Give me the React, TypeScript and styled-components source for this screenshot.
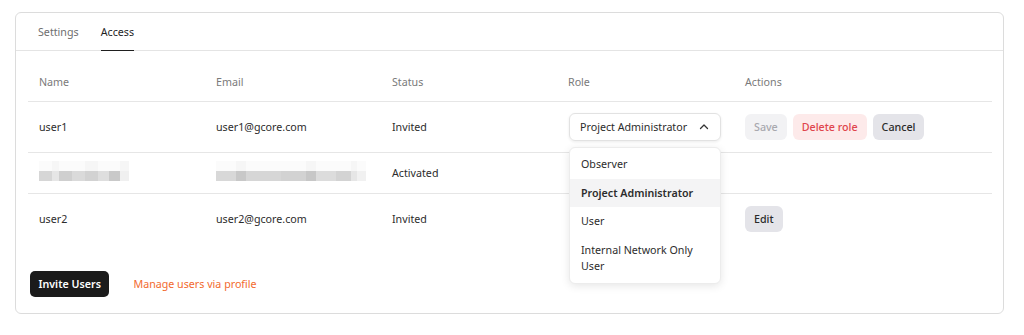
import React from 'react';
import styled, { createGlobalStyle } from 'styled-components';

const GlobalStyle = createGlobalStyle`
  body {
    margin: 0;
    background: #ffffff;
    font-family: 'Noto Sans', 'Open Sans', sans-serif;
    font-size: 10.7px;
    color: #2c2c2c;
  }
`;

const Page = styled.div`
  padding: 12px 20px 0 15px;
`;

const Card = styled.section`
  border: 1px solid #dcdcdc;
  border-radius: 6px;
  padding-bottom: 16px;
`;

const TabBar = styled.nav`
  display: flex;
  gap: 22px;
  height: 37px;
  padding-left: 22px;
  border-bottom: 1px solid #e4e4e4;
`;

const Tab = styled.div<{ $active?: boolean }>`
  display: flex;
  align-items: center;
  color: ${(p) => (p.$active ? '#1f1f1f' : '#6e6e6e')};
  border-bottom: 1px solid ${(p) => (p.$active ? '#1f1f1f' : 'transparent')};
  margin-bottom: -1px;
  padding-top: 1px;
`;

const Table = styled.div`
  margin: 12px 11px 0 12px;
`;

const Row = styled.div<{ $height: number; $last?: boolean }>`
  box-sizing: border-box;
  display: grid;
  grid-template-columns: 177px 176px 176px 177px 1fr;
  align-items: center;
  height: ${(p) => p.$height}px;
  border-bottom: 1px solid ${(p) => (p.$last ? 'transparent' : '#e6e6e6')};
`;

const Cell = styled.div<{ $head?: boolean }>`
  position: relative;
  padding-left: 11px;
  color: ${(p) => (p.$head ? '#7a7a7a' : '#2c2c2c')};
  display: flex;
  align-items: center;
  gap: 6px;
  white-space: nowrap;
`;

const Blur = styled.div`
  display: flex;
  flex-direction: column;
  margin-top: -4px;
`;

const BlurLine = styled.div`
  display: flex;
  height: 10px;
`;

const Pix = styled.span<{ $w: number; $c: string }>`
  width: ${(p) => p.$w}px;
  background: ${(p) => p.$c};
`;

const Select = styled.div`
  box-sizing: border-box;
  width: 152px;
  height: 28px;
  margin-left: 1px;
  padding: 0 10px;
  display: flex;
  align-items: center;
  justify-content: space-between;
  border: 1px solid #e2e2e2;
  border-radius: 6px;
  box-shadow: 0 1px 3px rgba(0, 0, 0, 0.08);
  color: #2c2c2c;
`;

const Menu = styled.ul`
  position: absolute;
  top: 34px;
  left: 12px;
  width: 152px;
  box-sizing: border-box;
  margin: 0;
  padding: 2px 0 3px;
  list-style: none;
  background: #fff;
  border: 1px solid #ececec;
  border-radius: 6px;
  box-shadow: 0 2px 8px rgba(0, 0, 0, 0.1);
  white-space: normal;
  z-index: 5;
`;

const MenuItem = styled.li<{ $selected?: boolean }>`
  padding: 6.25px 11px;
  line-height: 16px;
  font-weight: ${(p) => (p.$selected ? 600 : 400)};
  background: ${(p) => (p.$selected ? '#f4f4f5' : 'transparent')};
  color: #2c2c2c;
`;

type Kind = 'disabled' | 'danger' | 'neutral' | 'primary';

const palette: Record<Kind, { bg: string; fg: string }> = {
  disabled: { bg: '#f2f2f4', fg: '#a8a8ae' },
  danger: { bg: '#fdeaea', fg: '#e0444c' },
  neutral: { bg: '#e4e4e9', fg: '#2a2a2a' },
  primary: { bg: '#1b1b1b', fg: '#ffffff' },
};

const Button = styled.button<{ $kind: Kind }>`
  font-family: inherit;
  font-size: 10.7px;
  font-weight: 500;
  height: 26px;
  padding: 0 9px;
  border: none;
  border-radius: 6px;
  background: ${(p) => palette[p.$kind].bg};
  color: ${(p) => palette[p.$kind].fg};
`;

const Footer = styled.div`
  display: flex;
  align-items: center;
  gap: 24px;
  margin: 27px 0 0 14px;
`;

const Invite = styled(Button)`
  font-weight: 600;
  padding: 0 8.5px;
  border-radius: 5px;
`;

const Link = styled.a`
  color: #f26a2e;
  text-decoration: none;
`;

const Chevron = () => (
  <svg width="12" height="12" viewBox="0 0 12 12" fill="none">
    <path d="M2.5 7.5 6 4l3.5 3.5" stroke="#333" strokeWidth="1.3" strokeLinecap="round" strokeLinejoin="round" />
  </svg>
);

const nameBlur = [
  ['#d6d6d6', 13], ['#e6e6e6', 7], ['#cfcfcf', 13], ['#dadada', 13], ['#d2d2d2', 13], ['#dedede', 11], ['#c9c9c9', 11], ['#f0f0f0', 9],
] as const;
const emailBlur = [
  ['#d8d8d8', 20], ['#c8c8c8', 10], ['#d6d6d6', 35], ['#d2d2d2', 25], ['#c7c7c7', 10], ['#dcdcdc', 20], ['#d3d3d3', 15], ['#e6e6e6', 6], ['#f1f1f1', 9],
] as const;

const Pixels = ({ data }: { data: readonly (readonly [string, number])[] }) => (
  <Blur>
    <BlurLine>
      {data.map(([, w], i) => (
        <Pix key={i} $w={w} $c={i % 3 === 1 ? '#f6f6f6' : '#fbfbfb'} />
      ))}
    </BlurLine>
    <BlurLine>
      {data.map(([c, w], i) => (
        <Pix key={i} $w={w} $c={c} />
      ))}
    </BlurLine>
  </Blur>
);

const roles = ['Observer', 'Project Administrator', 'User', 'Internal Network Only User'];

export default function App() {
  return (
    <>
      <GlobalStyle />
      <Page>
        <Card>
          <TabBar>
            <Tab>Settings</Tab>
            <Tab $active>Access</Tab>
          </TabBar>
          <Table>
            <Row $height={39}>
              <Cell $head>Name</Cell>
              <Cell $head>Email</Cell>
              <Cell $head>Status</Cell>
              <Cell $head>Role</Cell>
              <Cell $head>Actions</Cell>
            </Row>
            <Row $height={51}>
              <Cell>user1</Cell>
              <Cell>user1@gcore.com</Cell>
              <Cell>Invited</Cell>
              <Cell>
                <Select>
                  Project Administrator
                  <Chevron />
                </Select>
                <Menu>
                  {roles.map((r) => (
                    <MenuItem key={r} $selected={r === 'Project Administrator'}>
                      {r}
                    </MenuItem>
                  ))}
                </Menu>
              </Cell>
              <Cell>
                <Button $kind="disabled">Save</Button>
                <Button $kind="danger">Delete role</Button>
                <Button $kind="neutral">Cancel</Button>
              </Cell>
            </Row>
            <Row $height={41}>
              <Cell>
                <Pixels data={nameBlur} />
              </Cell>
              <Cell>
                <Pixels data={emailBlur} />
              </Cell>
              <Cell>Activated</Cell>
              <Cell />
              <Cell />
            </Row>
            <Row $height={50} $last>
              <Cell>user2</Cell>
              <Cell>user2@gcore.com</Cell>
              <Cell>Invited</Cell>
              <Cell />
              <Cell>
                <Button $kind="neutral">Edit</Button>
              </Cell>
            </Row>
          </Table>
          <Footer>
            <Invite $kind="primary">Invite Users</Invite>
            <Link href="#">Manage users via profile</Link>
          </Footer>
        </Card>
      </Page>
    </>
  );
}
